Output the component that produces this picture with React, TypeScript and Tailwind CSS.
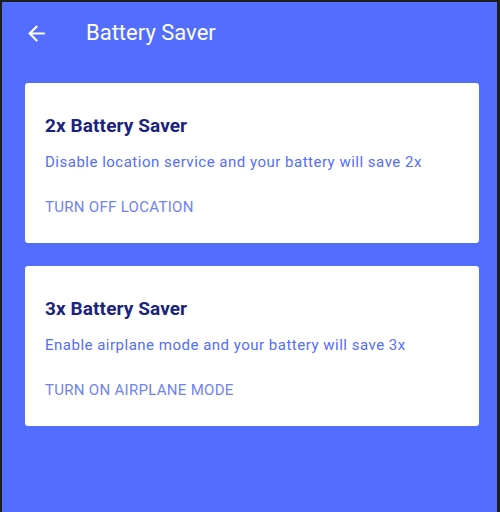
import React from 'react';

interface SaverCardProps {
  title: string;
  description: string;
  action: string;
}

const BackArrow = () => (
  <svg viewBox="0 0 24 24" className="w-[25px] h-[25px]" fill="white">
    <path d="M20 11H7.83l5.59-5.59L12 4l-8 8 8 8 1.41-1.41L7.83 13H20v-2z" />
  </svg>
);

const SaverCard: React.FC<SaverCardProps> = ({ title, description, action }) => (
  <div className="bg-white rounded-[3px] h-[160px] pl-[20px] pt-[31px]">
    <h2 className="text-[19px] leading-[24px] font-bold tracking-[0.1px] text-[#1a237e]">{title}</h2>
    <p className="mt-[14px] text-[15px] leading-[20px] tracking-[0.5px] text-[#536dfe]">{description}</p>
    <button className="mt-[25px] text-[15px] leading-[20px] tracking-[0.3px] text-[#7083f2] uppercase">
      {action}
    </button>
  </div>
);

export default function App() {
  return (
    <div
      className="w-[500px] h-[512px] bg-[#536dfe] border-t-2 border-l-2 border-r-[3px] border-[#1e1e1e] overflow-hidden"
      style={{ fontFamily: 'Roboto, "Noto Sans", sans-serif' }}
    >
      <header className="h-[62px] flex items-center pl-[22px]">
        <BackArrow />
        <h1 className="ml-[37px] text-[22px] leading-[28px] text-white">Battery Saver</h1>
      </header>

      <main className="pl-[23px] pr-[18px] pt-[19px] flex flex-col gap-[23px]">
        <SaverCard
          title="2x Battery Saver"
          description="Disable location service and your battery will save 2x"
          action="Turn off location"
        />
        <SaverCard
          title="3x Battery Saver"
          description="Enable airplane mode and your battery will save 3x"
          action="Turn on airplane mode"
        />
      </main>
    </div>
  );
}
